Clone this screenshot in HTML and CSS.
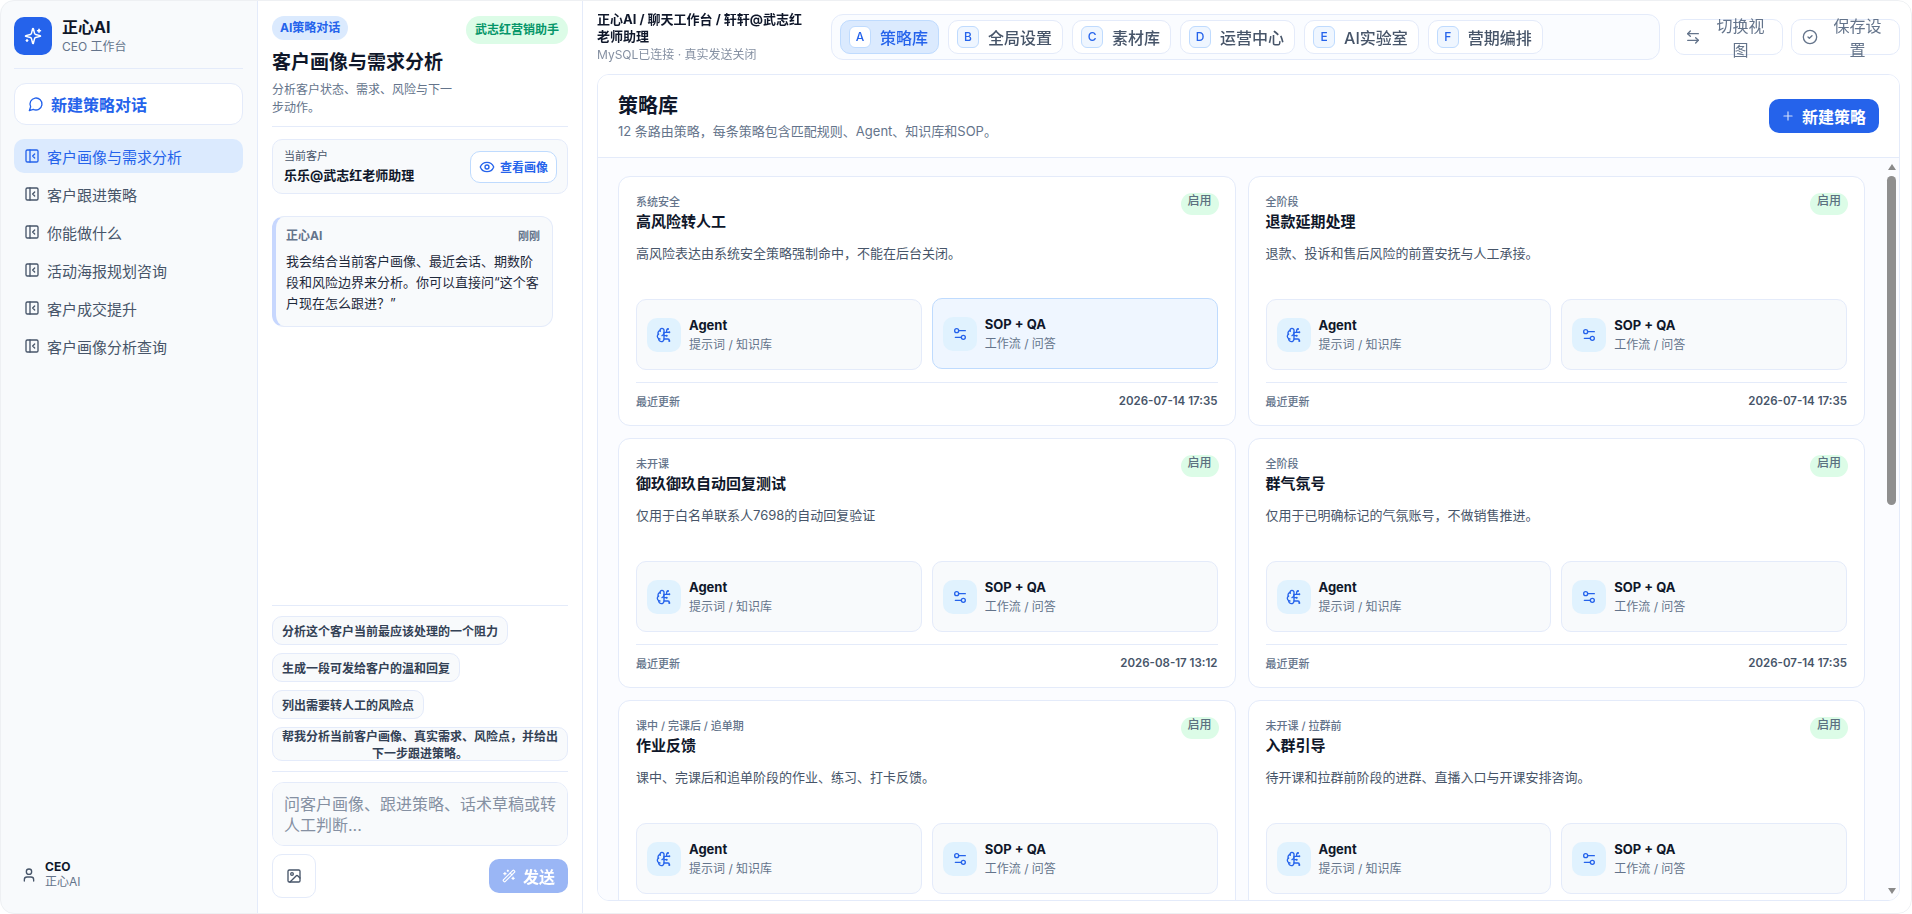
FILE: index.html
```html
<!DOCTYPE html>
<html lang="zh-CN">
<head>
  <meta charset="UTF-8" />
  <meta name="viewport" content="width=device-width, initial-scale=1" />
  <title>正心AI</title>
  <link rel="stylesheet" href="styles.css">
</head>
<body>
  <svg class="sprite" aria-hidden="true">
    <symbol id="i-sparkles" viewBox="0 0 24 24"><path d="M9.937 15.5A2 2 0 0 0 8.5 14.063l-6.135-1.582a.5.5 0 0 1 0-.962L8.5 9.936A2 2 0 0 0 9.937 8.5l1.582-6.135a.5.5 0 0 1 .963 0L14.063 8.5A2 2 0 0 0 15.5 9.937l6.135 1.581a.5.5 0 0 1 0 .964L15.5 14.063a2 2 0 0 0-1.437 1.437l-1.582 6.135a.5.5 0 0 1-.963 0z"/><path d="M20 3v4"/><path d="M22 5h-4"/><path d="M4 17v2"/><path d="M5 18H3"/></symbol>
    <symbol id="i-message" viewBox="0 0 24 24"><path d="M7.9 20A9 9 0 1 0 4 16.1L2 22Z"/></symbol>
    <symbol id="i-panel" viewBox="0 0 24 24"><rect x="3" y="3" width="18" height="18" rx="2"/><path d="M9 3v18"/><path d="m16 15-3-3 3-3"/></symbol>
    <symbol id="i-user" viewBox="0 0 24 24"><path d="M19 21v-2a4 4 0 0 0-4-4H9a4 4 0 0 0-4 4v2"/><circle cx="12" cy="7" r="4"/></symbol>
    <symbol id="i-eye" viewBox="0 0 24 24"><path d="M2.062 12.348a1 1 0 0 1 0-.696 10.75 10.75 0 0 1 19.876 0 1 1 0 0 1 0 .696 10.75 10.75 0 0 1-19.876 0"/><circle cx="12" cy="12" r="3"/></symbol>
    <symbol id="i-image" viewBox="0 0 24 24"><rect x="3" y="3" width="18" height="18" rx="2"/><circle cx="9" cy="9" r="2"/><path d="m21 15-3.086-3.086a2 2 0 0 0-2.828 0L6 21"/></symbol>
    <symbol id="i-wand" viewBox="0 0 24 24"><path d="m21.64 3.64-1.28-1.28a1.21 1.21 0 0 0-1.72 0L2.36 18.64a1.21 1.21 0 0 0 0 1.72l1.28 1.28a1.2 1.2 0 0 0 1.72 0L21.64 5.36a1.2 1.2 0 0 0 0-1.72"/><path d="m14 7 3 3"/><path d="M5 6v4"/><path d="M19 14v4"/><path d="M10 2v2"/><path d="M7 8H3"/><path d="M21 16h-4"/><path d="M11 3H9"/></symbol>
    <symbol id="i-swap" viewBox="0 0 24 24"><path d="M8 3 4 7l4 4"/><path d="M4 7h16"/><path d="m16 21 4-4-4-4"/><path d="M20 17H4"/></symbol>
    <symbol id="i-check" viewBox="0 0 24 24"><circle cx="12" cy="12" r="10"/><path d="m9 12 2 2 4-4"/></symbol>
    <symbol id="i-plus" viewBox="0 0 24 24"><path d="M5 12h14"/><path d="M12 5v14"/></symbol>
    <symbol id="i-brain" viewBox="0 0 24 24"><path d="M12 5a3 3 0 1 0-5.997.125 4 4 0 0 0-2.526 5.77 4 4 0 0 0 .556 6.588A4 4 0 1 0 12 18Z"/><path d="M9 13a4.5 4.5 0 0 0 3-4"/><path d="M6.003 5.125A3 3 0 0 0 6.401 6.5"/><path d="M3.477 10.896a4 4 0 0 1 .585-.396"/><path d="M6 18a4 4 0 0 1-1.967-.516"/><path d="M12 13h4"/><path d="M12 18h6a2 2 0 0 1 2 2v1"/><path d="M12 8h8"/><path d="M16 8V5a2 2 0 0 1 2-2"/><circle cx="16" cy="13" r=".5"/><circle cx="18" cy="3" r=".5"/><circle cx="20" cy="21" r=".5"/><circle cx="20" cy="8" r=".5"/></symbol>
    <symbol id="i-sliders" viewBox="0 0 24 24"><path d="M20 7h-9"/><path d="M14 17H5"/><circle cx="17" cy="17" r="3"/><circle cx="7" cy="7" r="3"/></symbol>
  </svg>

  <div class="app">
    <aside class="sidebar">
      <div class="brand">
        <div class="brand-logo"><svg class="icon"><use href="#i-sparkles"/></svg></div>
        <div>
          <div class="brand-name">正心AI</div>
          <div class="brand-sub">CEO 工作台</div>
        </div>
      </div>

      <button class="new-chat"><svg class="icon"><use href="#i-message"/></svg>新建策略对话</button>

      <nav class="nav">
        <a class="nav-item active"><svg class="icon"><use href="#i-panel"/></svg>客户画像与需求分析</a>
        <a class="nav-item"><svg class="icon"><use href="#i-panel"/></svg>客户跟进策略</a>
        <a class="nav-item"><svg class="icon"><use href="#i-panel"/></svg>你能做什么</a>
        <a class="nav-item"><svg class="icon"><use href="#i-panel"/></svg>活动海报规划咨询</a>
        <a class="nav-item"><svg class="icon"><use href="#i-panel"/></svg>客户成交提升</a>
        <a class="nav-item"><svg class="icon"><use href="#i-panel"/></svg>客户画像分析查询</a>
      </nav>

      <div class="user">
        <svg class="icon"><use href="#i-user"/></svg>
        <div>
          <div class="user-name">CEO</div>
          <div class="user-org">正心AI</div>
        </div>
      </div>
    </aside>

    <section class="chat">
      <div class="chat-pills">
        <span class="pill pill-blue">AI策略对话</span>
        <span class="pill pill-green">武志红营销助手</span>
      </div>
      <h2 class="chat-title">客户画像与需求分析</h2>
      <p class="chat-desc">分析客户状态、需求、风险与下一步动作。</p>

      <div class="customer">
        <div>
          <div class="customer-label">当前客户</div>
          <div class="customer-name">乐乐@武志红老师助理</div>
        </div>
        <button class="view-btn"><svg class="icon"><use href="#i-eye"/></svg>查看画像</button>
      </div>

      <div class="messages">
        <div class="message">
          <div class="message-head"><span>正心AI</span><span class="message-time">刚刚</span></div>
          <p>我会结合当前客户画像、最近会话、期数阶段和风险边界来分析。你可以直接问“这个客户现在怎么跟进？”</p>
        </div>
      </div>

      <div class="chips">
        <button class="chip">分析这个客户当前最应该处理的一个阻力</button>
        <button class="chip">生成一段可发给客户的温和回复</button>
        <button class="chip">列出需要转人工的风险点</button>
        <button class="chip chip-long">帮我分析当前客户画像、真实需求、风险点，并给出下一步跟进策略。</button>
      </div>

      <div class="composer">
        <textarea class="composer-input" placeholder="问客户画像、跟进策略、话术草稿或转人工判断..."></textarea>
        <div class="composer-actions">
          <button class="image-btn"><svg class="icon"><use href="#i-image"/></svg></button>
          <button class="send-btn"><svg class="icon"><use href="#i-wand"/></svg>发送</button>
        </div>
      </div>
    </section>

    <main class="main">
      <header class="topbar">
        <div class="crumbs">
          <div class="crumbs-path">正心AI / 聊天工作台 / 轩轩@武志红老师助理</div>
          <div class="crumbs-status">MySQL已连接 · 真实发送关闭</div>
        </div>
        <div class="tabs">
          <button class="tab active"><span class="tab-key">A</span>策略库</button>
          <button class="tab"><span class="tab-key">B</span>全局设置</button>
          <button class="tab"><span class="tab-key">C</span>素材库</button>
          <button class="tab"><span class="tab-key">D</span>运营中心</button>
          <button class="tab"><span class="tab-key">E</span>AI实验室</button>
          <button class="tab"><span class="tab-key">F</span>营期编排</button>
        </div>
        <button class="top-btn"><svg class="icon"><use href="#i-swap"/></svg>切换视图</button>
        <button class="top-btn"><svg class="icon"><use href="#i-check"/></svg>保存设置</button>
      </header>

      <section class="library">
        <div class="library-head">
          <div>
            <h1>策略库</h1>
            <p>12 条路由策略，每条策略包含匹配规则、Agent、知识库和SOP。</p>
          </div>
          <button class="primary-btn"><svg class="icon"><use href="#i-plus"/></svg>新建策略</button>
        </div>

        <div class="library-view">
          <div class="library-body">
            <div class="cards">
              <article class="card">
                <span class="badge">启用</span>
                <div class="card-stage">系统安全</div>
                <h3>高风险转人工</h3>
                <p class="card-desc">高风险表达由系统安全策略强制命中，不能在后台关闭。</p>
                <div class="links">
                  <div class="link"><span class="link-icon"><svg class="icon"><use href="#i-brain"/></svg></span><div><b>Agent</b><small>提示词 / 知识库</small></div></div>
                  <div class="link hover"><span class="link-icon"><svg class="icon"><use href="#i-sliders"/></svg></span><div><b>SOP + QA</b><small>工作流 / 问答</small></div></div>
                </div>
                <div class="card-foot"><span>最近更新</span><time>2026-07-14 17:35</time></div>
              </article>

              <article class="card">
                <span class="badge">启用</span>
                <div class="card-stage">全阶段</div>
                <h3>退款延期处理</h3>
                <p class="card-desc">退款、投诉和售后风险的前置安抚与人工承接。</p>
                <div class="links">
                  <div class="link"><span class="link-icon"><svg class="icon"><use href="#i-brain"/></svg></span><div><b>Agent</b><small>提示词 / 知识库</small></div></div>
                  <div class="link"><span class="link-icon"><svg class="icon"><use href="#i-sliders"/></svg></span><div><b>SOP + QA</b><small>工作流 / 问答</small></div></div>
                </div>
                <div class="card-foot"><span>最近更新</span><time>2026-07-14 17:35</time></div>
              </article>

              <article class="card">
                <span class="badge">启用</span>
                <div class="card-stage">未开课</div>
                <h3>御玖御玖自动回复测试</h3>
                <p class="card-desc">仅用于白名单联系人7698的自动回复验证</p>
                <div class="links">
                  <div class="link"><span class="link-icon"><svg class="icon"><use href="#i-brain"/></svg></span><div><b>Agent</b><small>提示词 / 知识库</small></div></div>
                  <div class="link"><span class="link-icon"><svg class="icon"><use href="#i-sliders"/></svg></span><div><b>SOP + QA</b><small>工作流 / 问答</small></div></div>
                </div>
                <div class="card-foot"><span>最近更新</span><time>2026-08-17 13:12</time></div>
              </article>

              <article class="card">
                <span class="badge">启用</span>
                <div class="card-stage">全阶段</div>
                <h3>群气氛号</h3>
                <p class="card-desc">仅用于已明确标记的气氛账号，不做销售推进。</p>
                <div class="links">
                  <div class="link"><span class="link-icon"><svg class="icon"><use href="#i-brain"/></svg></span><div><b>Agent</b><small>提示词 / 知识库</small></div></div>
                  <div class="link"><span class="link-icon"><svg class="icon"><use href="#i-sliders"/></svg></span><div><b>SOP + QA</b><small>工作流 / 问答</small></div></div>
                </div>
                <div class="card-foot"><span>最近更新</span><time>2026-07-14 17:35</time></div>
              </article>

              <article class="card">
                <span class="badge">启用</span>
                <div class="card-stage">课中 / 完课后 / 追单期</div>
                <h3>作业反馈</h3>
                <p class="card-desc">课中、完课后和追单阶段的作业、练习、打卡反馈。</p>
                <div class="links">
                  <div class="link"><span class="link-icon"><svg class="icon"><use href="#i-brain"/></svg></span><div><b>Agent</b><small>提示词 / 知识库</small></div></div>
                  <div class="link"><span class="link-icon"><svg class="icon"><use href="#i-sliders"/></svg></span><div><b>SOP + QA</b><small>工作流 / 问答</small></div></div>
                </div>
              </article>

              <article class="card">
                <span class="badge">启用</span>
                <div class="card-stage">未开课 / 拉群前</div>
                <h3>入群引导</h3>
                <p class="card-desc">待开课和拉群前阶段的进群、直播入口与开课安排咨询。</p>
                <div class="links">
                  <div class="link"><span class="link-icon"><svg class="icon"><use href="#i-brain"/></svg></span><div><b>Agent</b><small>提示词 / 知识库</small></div></div>
                  <div class="link"><span class="link-icon"><svg class="icon"><use href="#i-sliders"/></svg></span><div><b>SOP + QA</b><small>工作流 / 问答</small></div></div>
                </div>
              </article>
            </div>
          </div>
          <div class="scrollbar" aria-hidden="true">
            <span class="scroll-up"></span>
            <span class="scroll-thumb"></span>
            <span class="scroll-down"></span>
          </div>
        </div>
      </section>
    </main>
  </div>
</body>
</html>
```

FILE: styles.css
```css
* {
  box-sizing: border-box;
}
html, body {
  height: 100%;
}
body {
  margin: 0;
  background: #ffffff;
  color: #0f172a;
  font-family: Inter, "Noto Sans CJK SC", sans-serif;
  overflow: hidden;
}
button, textarea {
  font-family: inherit;
}
h1, h2, h3, p {
  margin: 0;
}
.sprite {
  display: none;
}
.icon {
  width: 16px;
  height: 16px;
  flex: none;
  fill: none;
  stroke: currentColor;
  stroke-width: 2;
  stroke-linecap: round;
  stroke-linejoin: round;
}

.app {
  position: relative;
  display: grid;
  grid-template-columns: 258px 325px minmax(0, 1fr);
  grid-template-rows: minmax(0, 1fr);
  height: 914px;
  border-radius: 14px;
  overflow: hidden;
}
.app::after {
  content: "";
  position: absolute;
  inset: 0;
  border: 1px solid #eef0f3;
  border-radius: 14px;
  pointer-events: none;
}

/* sidebar */
.sidebar {
  display: flex;
  flex-direction: column;
  min-height: 0;
  padding: 17px 14px 24px 14px;
  background: #f8fafc;
  border-right: 1px solid #e4ebfa;
}
.brand {
  display: flex;
  align-items: center;
  gap: 10px;
  padding-bottom: 13px;
  border-bottom: 1px solid #e4ebfa;
}
.brand-logo {
  display: flex;
  align-items: center;
  justify-content: center;
  width: 38px;
  height: 38px;
  border-radius: 10px;
  background: #2563eb;
  color: #ffffff;
}
.brand-logo .icon {
  width: 18px;
  height: 18px;
}
.brand-name {
  font-size: 16px;
  line-height: 20px;
  font-weight: 700;
}
.brand-sub {
  margin-top: 2px;
  font-size: 12px;
  line-height: 16px;
  color: #64748b;
}
.new-chat {
  display: flex;
  align-items: center;
  gap: 7px;
  height: 42px;
  margin-top: 14px;
  padding: 0 13px;
  border: 1px solid #e4ebfa;
  border-radius: 12px;
  background: #ffffff;
  color: #2563eb;
  font-size: 16px;
  font-weight: 700;
}
.nav {
  display: flex;
  flex-direction: column;
  gap: 4px;
  margin-top: 14px;
}
.nav-item {
  display: flex;
  align-items: center;
  gap: 7px;
  height: 34px;
  padding: 0 10px;
  border-radius: 10px;
  color: #475569;
  font-size: 15px;
}
.nav-item.active {
  background: #dbeafe;
  color: #2563eb;
}
.user {
  display: flex;
  align-items: center;
  gap: 8px;
  margin-top: auto;
  padding-left: 7px;
  color: #475569;
}
.user-name {
  font-size: 12px;
  line-height: 15px;
  font-weight: 700;
  color: #0f172a;
}
.user-org {
  font-size: 12px;
  line-height: 16px;
  color: #64748b;
}

/* chat column */
.chat {
  display: flex;
  flex-direction: column;
  min-height: 0;
  padding: 16px 14px 16px 14px;
  border-right: 1px solid #e4ebfa;
  background: #ffffff;
}
.chat-pills {
  display: flex;
  justify-content: space-between;
  align-items: flex-start;
}
.pill {
  border-radius: 14px;
  font-weight: 700;
}
.pill-blue {
  padding: 0 8px;
  height: 24px;
  line-height: 24px;
  background: #dbeafe;
  color: #2563eb;
  font-size: 12px;
}
.pill-green {
  padding: 0 9px;
  height: 28px;
  line-height: 28px;
  background: #dcfce7;
  color: #059669;
  font-size: 12px;
}
.chat-title {
  margin-top: 5px;
  font-size: 19px;
  line-height: 28px;
  font-weight: 700;
}
.chat-desc {
  width: 186px;
  margin-top: 4px;
  font-size: 12px;
  line-height: 18px;
  color: #64748b;
}
.customer {
  display: flex;
  justify-content: space-between;
  align-items: center;
  position: relative;
  flex: none;
  height: 55px;
  margin-top: 22px;
  padding: 0 10px 0 11px;
  border: 1px solid #e4ebfa;
  border-radius: 10px;
  background: #f8fafc;
}
.customer::before {
  content: "";
  position: absolute;
  left: -1px;
  right: -1px;
  top: -14px;
  border-top: 1px solid #e4ebfa;
}
.customer-label {
  font-size: 11px;
  line-height: 15px;
  color: #475569;
}
.customer-name {
  margin-top: 2px;
  font-size: 13px;
  line-height: 18px;
  font-weight: 700;
}
.view-btn {
  display: flex;
  align-items: center;
  gap: 5px;
  height: 32px;
  padding: 0 8px;
  border: 1px solid #bfdbfe;
  border-radius: 10px;
  background: #ffffff;
  color: #2563eb;
  font-size: 12px;
  font-weight: 700;
}
.messages {
  flex: 1;
  min-height: 0;
  padding-top: 22px;
}
.message {
  width: 281px;
  padding: 10px 12px 12px 10px;
  border: 1px solid #e4ebfa;
  border-left: 4px solid #c7d7fe;
  border-radius: 12px;
  background: #f8fafc;
}
.message-head {
  display: flex;
  justify-content: space-between;
  align-items: center;
  font-size: 12px;
  line-height: 18px;
  font-weight: 700;
  color: #64748b;
}
.message-time {
  font-size: 11px;
}
.message p {
  margin-top: 6px;
  font-size: 13px;
  line-height: 21px;
  color: #1e293b;
}
.chips {
  display: flex;
  flex-direction: column;
  align-items: flex-start;
  flex: none;
  gap: 8px;
  padding: 10px 0;
  border-top: 1px solid #e4ebfa;
  border-bottom: 1px solid #e4ebfa;
}
.chip {
  height: 29px;
  padding: 0 9px;
  border: 1px solid #e4ebfa;
  border-radius: 10px;
  background: #f8fafc;
  color: #334155;
  font-size: 12px;
  font-weight: 700;
}
.chip-long {
  width: 100%;
  height: 34px;
  line-height: 17px;
}
.composer {
  flex: none;
  padding-top: 10px;
}
.composer-input {
  display: block;
  width: 100%;
  height: 64px;
  padding: 11px 11px;
  border: 1px solid #e4ebfa;
  border-radius: 12px;
  background: #f8fafc;
  font-size: 16px;
  line-height: 21px;
  resize: none;
  outline: none;
}
.composer-input::placeholder {
  color: #8590a2;
}
.composer-actions {
  display: flex;
  justify-content: space-between;
  align-items: center;
  margin-top: 8px;
}
.image-btn {
  display: flex;
  align-items: center;
  justify-content: center;
  width: 44px;
  height: 44px;
  padding: 0;
  border: 1px solid #e4ebfa;
  border-radius: 10px;
  background: #ffffff;
  color: #475569;
}
.send-btn {
  display: flex;
  align-items: center;
  gap: 7px;
  height: 34px;
  padding: 0 13px;
  border: none;
  border-radius: 10px;
  background: #9ab6f5;
  color: #ffffff;
  font-size: 16px;
  font-weight: 700;
}
.send-btn .icon {
  width: 14px;
  height: 14px;
}

/* main column */
.main {
  display: flex;
  flex-direction: column;
  min-width: 0;
  min-height: 0;
  padding: 0 12px 13px 14px;
}
.topbar {
  display: flex;
  align-items: center;
  flex: none;
  height: 74px;
}
.crumbs {
  width: 234px;
  flex: none;
}
.crumbs-path {
  width: 214px;
  font-size: 13px;
  line-height: 17px;
  font-weight: 700;
}
.crumbs-status {
  margin-top: 2px;
  font-size: 12px;
  line-height: 16px;
  color: #8590a2;
}
.tabs {
  display: flex;
  gap: 9px;
  width: 829px;
  height: 46px;
  margin-right: 14px;
  padding: 5px 8px;
  flex: none;
  border: 1px solid #e4ebfa;
  border-radius: 12px;
  background: #fafcff;
}
.tab {
  display: flex;
  align-items: center;
  gap: 9px;
  height: 34px;
  padding: 0 10px 0 8px;
  border: 1px solid #e4ebfa;
  border-radius: 10px;
  background: #ffffff;
  color: #475569;
  font-size: 16px;
  font-weight: 500;
}
.tab.active {
  background: #dbeafe;
  border-color: #bfdbfe;
  color: #2563eb;
}
.tab-key {
  width: 22px;
  height: 22px;
  border: 1px solid #bfdbfe;
  border-radius: 6px;
  background: #eff6ff;
  color: #2563eb;
  font-size: 12px;
  line-height: 20px;
  text-align: center;
  flex: none;
}
.tab.active .tab-key {
  background: #ffffff;
}
.top-btn {
  display: flex;
  align-items: center;
  gap: 8px;
  width: 109px;
  height: 36px;
  margin-right: 8px;
  padding: 0 10px;
  flex: none;
  border: 1px solid #e4ebfa;
  border-radius: 10px;
  background: #ffffff;
  color: #64748b;
  font-size: 16px;
}
.top-btn:last-child {
  margin-right: 0;
}
.library {
  display: flex;
  flex-direction: column;
  flex: 1;
  min-height: 0;
  border: 1px solid #e4ebfa;
  border-radius: 12px;
  overflow: hidden;
}
.library-head {
  display: flex;
  justify-content: space-between;
  align-items: center;
  flex: none;
  height: 83px;
  padding: 0 20px;
  border-bottom: 1px solid #e4ebfa;
  background: #ffffff;
}
.library-head h1 {
  font-size: 20px;
  line-height: 28px;
  font-weight: 700;
}
.library-head p {
  margin-top: 2px;
  font-size: 13px;
  line-height: 18px;
  color: #64748b;
}
.primary-btn {
  display: flex;
  align-items: center;
  gap: 7px;
  height: 34px;
  padding: 0 13px 0 12px;
  border: none;
  border-radius: 10px;
  background: #2563eb;
  color: #ffffff;
  font-size: 16px;
  font-weight: 700;
}
.primary-btn .icon {
  width: 14px;
  height: 14px;
  opacity: 0.8;
}
.library-view {
  display: flex;
  flex: 1;
  min-height: 0;
  background: #fbfcff;
}
.library-body {
  flex: 1;
  min-width: 0;
  overflow: hidden;
  padding: 18px 19px 0 20px;
}
.scrollbar {
  display: flex;
  flex-direction: column;
  align-items: center;
  flex: none;
  width: 15px;
  padding: 6px 0;
}
.scroll-up {
  border-left: 4.5px solid transparent;
  border-right: 4.5px solid transparent;
  border-bottom: 6px solid #8a8a8a;
}
.scroll-thumb {
  width: 9px;
  height: 329px;
  margin-top: 6px;
  border-radius: 5px;
  background: #8f8f8f;
}
.scroll-down {
  margin-top: auto;
  border-left: 4.5px solid transparent;
  border-right: 4.5px solid transparent;
  border-top: 6px solid #8a8a8a;
}
.cards {
  display: grid;
  grid-template-columns: 1fr 1fr;
  grid-auto-rows: 250px;
  gap: 12px;
}
.card {
  position: relative;
  display: flex;
  flex-direction: column;
  padding: 17px 17px 0 17px;
  border: 1px solid #e4ebfa;
  border-radius: 12px;
  background: #ffffff;
}
.badge {
  position: absolute;
  top: 16px;
  right: 16px;
  width: 38px;
  height: 22px;
  border-radius: 11px;
  background: #dcfce7;
  color: #5b7080;
  font-size: 12px;
  line-height: 16px;
  font-weight: 500;
  text-align: center;
}
.card-stage {
  font-size: 11px;
  line-height: 16px;
  font-weight: 500;
  color: #64748b;
}
.card h3 {
  font-size: 15px;
  line-height: 24px;
  font-weight: 700;
}
.card-desc {
  height: 56px;
  margin-top: 9px;
  font-size: 13px;
  line-height: 20px;
  color: #475569;
}
.links {
  display: grid;
  grid-template-columns: 1fr 1fr;
  gap: 10px;
}
.link {
  display: flex;
  align-items: center;
  gap: 8px;
  height: 71px;
  padding: 0 10px;
  border: 1px solid #e4ebfa;
  border-radius: 10px;
  background: #f8fafc;
}
.link.hover {
  transform: translateY(-1px);
  background: #eff6ff;
  border-color: #bfdbfe;
}
.link-icon {
  display: flex;
  align-items: center;
  justify-content: center;
  width: 34px;
  height: 34px;
  border-radius: 10px;
  background: #e0f2fe;
  color: #2563eb;
}
.link b {
  display: block;
  font-size: 13px;
  line-height: 18px;
  font-weight: 700;
}
.link small {
  display: block;
  margin-top: 2px;
  font-size: 12px;
  line-height: 18px;
  color: #64748b;
}
.card-foot {
  display: flex;
  justify-content: space-between;
  align-items: center;
  height: 37px;
  margin-top: 12px;
  border-top: 1px solid #e4ebfa;
  font-size: 11px;
  font-weight: 500;
  color: #64748b;
}
.card-foot time {
  font-size: 11.5px;
  font-weight: 600;
  color: #475569;
}
```
